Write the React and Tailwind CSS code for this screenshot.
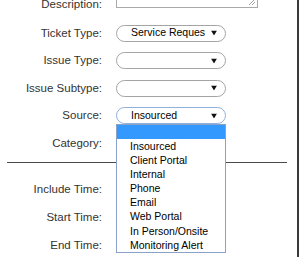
import React from 'react';

const font = { fontFamily: '"Liberation Sans", Arial, sans-serif' };

const sources = [
  'Insourced',
  'Client Portal',
  'Internal',
  'Phone',
  'Email',
  'Web Portal',
  'In Person/Onsite',
  'Monitoring Alert',
];

const Arrow = () => (
  <svg width="6" height="5" viewBox="0 0 6 5" className="absolute right-[8px] top-1/2 -translate-y-1/2">
    <polygon points="0,0 6,0 3,5" fill="#111" />
  </svg>
);

const Select = ({ value, focused, children }) => (
  <div
    className={`relative w-[110px] h-[17px] rounded-full border bg-white pl-[14px] pr-[20px] flex items-center text-[10.5px] text-black ${
      focused ? 'border-[#8fb0dc]' : 'border-[#a4a4a4]'
    }`}
  >
    <span className="overflow-hidden whitespace-nowrap w-full">{value}</span>
    <Arrow />
    {children}
  </div>
);

const Row = ({ label, children, tall }) => (
  <div className={`flex items-center gap-[14px] ${tall ? 'h-[28px]' : 'h-[27.5px]'}`}>
    <div className="w-[102px] text-right text-[11.5px] leading-[15px] text-[#333] whitespace-nowrap">{label}</div>
    {children}
  </div>
);

export default function App() {
  return (
    <div className="w-[299px] h-[257px] overflow-hidden bg-white flex" style={font}>
      <div className="flex-1">
        <div className="flex items-end gap-[14px] -mt-[30px] h-[42px]">
          <div className="w-[102px] text-right text-[11.5px] leading-[15px] text-[#333]">Description:</div>
          <div className="relative w-[142px] h-[38px] mb-[4px] border border-[#a9a9a9] bg-white">
            <svg width="8" height="8" viewBox="0 0 8 8" className="absolute right-[1px] bottom-[1px]">
              <line x1="1" y1="7" x2="7" y2="1" stroke="#888" strokeWidth="0.8" />
              <line x1="4" y1="7" x2="7" y2="4" stroke="#888" strokeWidth="0.8" />
            </svg>
          </div>
        </div>
        <div className="mt-[7.25px]">
          <Row label="Ticket Type:">
            <Select value="Service Request" />
          </Row>
          <Row label="Issue Type:">
            <Select value="" />
          </Row>
          <Row label="Issue Subtype:">
            <Select value="" />
          </Row>
          <Row label="Source:">
            <Select value="Insourced" focused>
              <div className="absolute left-[-1px] top-[16px] w-[110px] border border-[#8aa2c8] bg-white z-10">
                <div className="h-[14px] bg-[#3399ff]" />
                {sources.map((s) => (
                  <div key={s} className="h-[14.1px] leading-[14.1px] pl-[13px] text-[10.5px] text-black whitespace-nowrap">
                    {s}
                  </div>
                ))}
              </div>
            </Select>
          </Row>
          <Row label="Category:">
            <Select value="" />
          </Row>
        </div>
        <div className="mt-[5px] ml-[7px] w-[280px] h-px bg-[#4a4a4a]" />
        <div className="mt-[12.25px]">
          <Row label="Include Time:" tall />
          <Row label="Start Time:" tall />
          <Row label="End Time:" tall />
        </div>
      </div>
      <div className="w-[2px] bg-[#3a3a3a]" />
    </div>
  );
}
